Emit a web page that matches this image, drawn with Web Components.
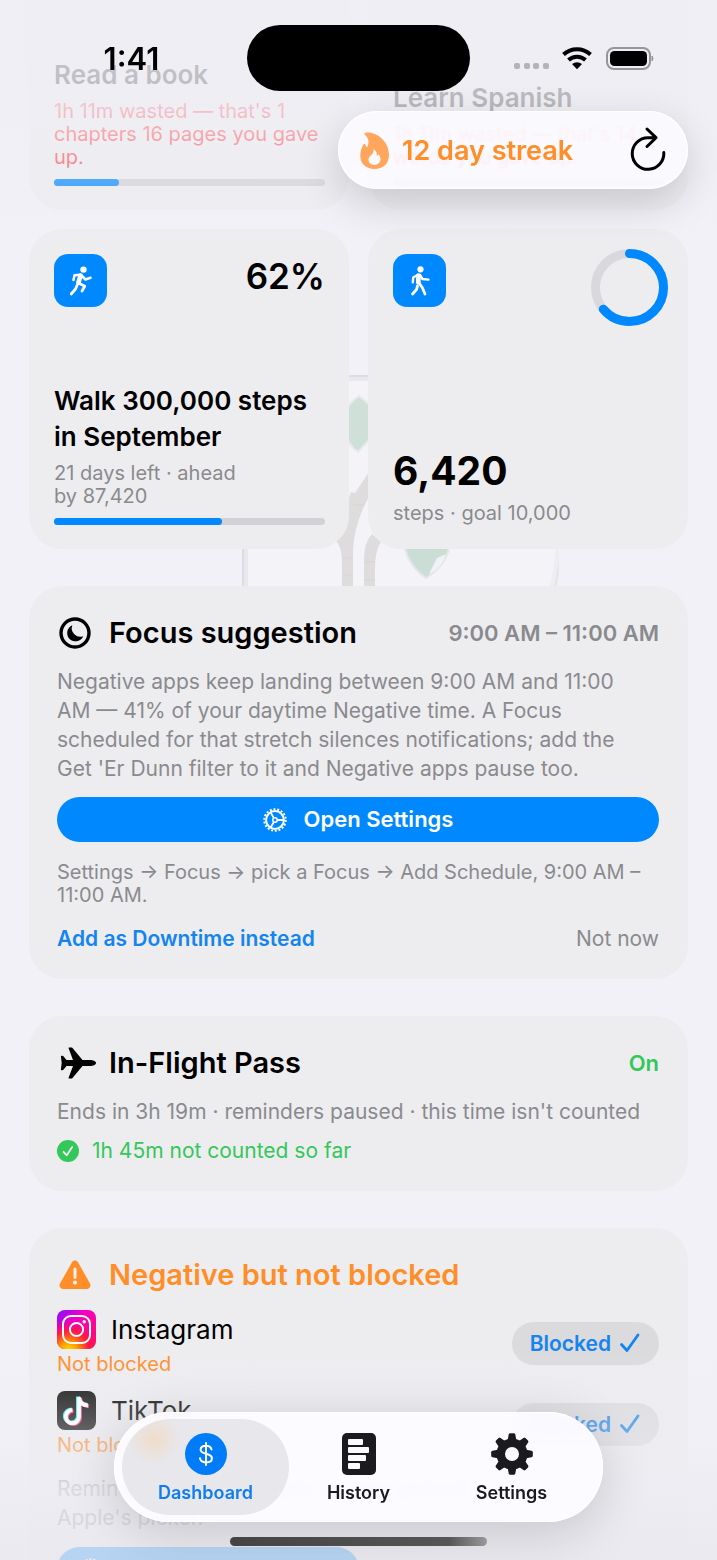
<!DOCTYPE html>
<html lang="en">
<head>
<meta charset="utf-8">
<meta name="viewport" content="width=device-width, initial-scale=1">
<title>Dashboard</title>
<style>
    html, body {
        height: 100%;
        margin: 0;
        overflow: hidden;
    }

    body {
        --blue: #0088ff;
        --orange: #ff8d28;
        --green: #34c759;
        --grey: #8a8a8e;
        --page: #f2f1f7;
        --card: #ededf0;
        font-family: Inter, "Liberation Sans", sans-serif;
        color: #000;
        background: var(--page);
    }
</style>
</head>
<body>
<app-screen>
    <status-bar slot="status" time="1:41"></status-bar>
    <streak-pill slot="streak" days="12"></streak-pill>

    <tile-grid>
        <goal-tile>
            <span slot="title">Read a book</span>
            <span slot="caption" style="color: #ff383c">1h 11m wasted — that's 1 chapters 16 pages you gave up.</span>
            <progress-line slot="progress" value="24"></progress-line>
        </goal-tile>
        <goal-tile>
            <span slot="title">Learn Spanish</span>
            <span slot="caption" style="color: #ff383c">1h 11m wasted — that's 14 words you gave up.</span>
            <progress-line slot="progress" value="0"></progress-line>
        </goal-tile>
        <goal-tile icon="run">
            <span slot="value">62%</span>
            <span slot="title">Walk 300,000 steps in September</span>
            <span slot="caption">21 days left · ahead<br>by 87,420</span>
            <progress-line slot="progress" value="62"></progress-line>
        </goal-tile>
        <goal-tile icon="walk">
            <progress-ring slot="value" value="64"></progress-ring>
            <strong slot="number">6,420</strong>
            <span slot="caption">steps · goal 10,000</span>
        </goal-tile>
    </tile-grid>

    <info-card icon="moon" heading="Focus suggestion">
        <span slot="aside">9:00 AM – 11:00 AM</span>
        <focus-suggestion></focus-suggestion>
    </info-card>

    <info-card icon="plane" heading="In-Flight Pass">
        <span slot="aside" style="color: var(--green)">On</span>
        <flight-pass></flight-pass>
    </info-card>

    <info-card icon="warning" heading="Negative but not blocked" style="--heading: var(--orange)">
        <blocked-list></blocked-list>
    </info-card>

    <tab-bar slot="tabs"></tab-bar>
</app-screen>

<script>
const ICONS = {
    run: `<svg viewBox="0 0 24 30" fill="none" stroke="#fff" stroke-width="3" stroke-linecap="round" stroke-linejoin="round">
        <circle cx="14.5" cy="3.6" r="3.2" fill="#fff" stroke="none"/>
        <path d="M4.5 14 L5.5 9.3 L11 8.8" stroke-width="2.5"/>
        <path d="M11.5 9.5 L9.3 17" stroke-width="4.6"/>
        <path d="M13 10 L16.500 13.500 L21.500 11.800" stroke-width="2.500"/>
        <path d="M9.500 17 L15.800 20.200 L13 25" stroke-width="2.800"/>
        <path d="M8 19.500 L6.500 23 L2.200 28" stroke-width="2.800"/></svg>`,
    walk: `<svg viewBox="0 0 24 30" fill="none" stroke="#fff" stroke-width="3" stroke-linecap="round" stroke-linejoin="round">
        <circle cx="12.500" cy="3.300" r="3.100" fill="#fff" stroke="none"/>
        <path d="M10.500 9.500 L10.300 16.500" stroke-width="4.600"/>
        <path d="M9.500 9 L5.200 11.500 L4.800 16.300" stroke-width="2.400"/>
        <path d="M12 9 L14.500 13 L20.500 13.600" stroke-width="2.400"/>
        <path d="M11.500 17.500 L14.500 22 L17 28" stroke-width="2.800"/>
        <path d="M9.500 20 L8.500 23.500 L4.500 28" stroke-width="2.800"/></svg>`,
    moon: `<svg viewBox="0 0 32 32"><circle cx="16" cy="16" r="14" fill="none" stroke="#000" stroke-width="3.400"/>
        <path d="M13.300 8.200 A8.400 8.400 0 1 0 24.300 19.200 A8.600 8.600 0 0 1 13.300 8.200Z"/></svg>`,
    plane: `<svg viewBox="-3 0 36 32"><path d="M36 16 C36 18 33 19 30 19 H22.500 L12.500 31 C12.200 31.500 11.800 31.600 11.300 31.600 H9.200 C8.600 31.600 8.400 31.200 8.600 30.700 L13 19 H6.500 L3.400 22.800 C3.100 23.100 2.800 23.300 2.400 23.300 H1.500 C1.100 23.300 .9 23 .9 22.600 L1.700 16 L.9 9.400 C.9 9 1.100 8.700 1.500 8.700 H2.400 C2.800 8.700 3.100 8.900 3.400 9.200 L6.500 13 H13 L8.600 1.300 C8.400 .8 8.600 .4 9.200 .4 H11.300 C11.800 .4 12.200 .5 12.500 1 L22.500 13 H30 C33 13 36 14 36 16Z"/></svg>`,
    warning: `<svg viewBox="0 0 34 32"><path d="M14 3.200 C15.300 .9 18.700 .9 20 3.200 L32 24.500 C33.300 26.900 31.700 30 28.700 30 H5.300 C2.300 30 .7 26.900 2 24.500Z" fill="#ff8d28"/>
        <path d="M17 10 V18.500" stroke="#f4f1ef" stroke-width="3" stroke-linecap="round"/><circle cx="17" cy="23.600" r="2.100" fill="#f4f1ef"/></svg>`,
    check: `<svg viewBox="0 0 22 22"><circle cx="11" cy="11" r="11" fill="#34c759"/>
        <path d="M6.500 11.800 L9.800 15.300 L15.200 7" fill="none" stroke="#f2f7f3" stroke-width="1.800" stroke-linecap="round" stroke-linejoin="round"/></svg>`,
    tick: `<svg viewBox="0 0 20 20"><path d="M1.500 11.500 L7 17.500 L18 2" fill="none" stroke="currentColor" stroke-width="2.800" stroke-linecap="round" stroke-linejoin="round"/></svg>`,
    gear: `<svg viewBox="0 0 24 24" fill="none" stroke="#fff"><circle cx="12" cy="12" r="10.800" stroke-width="2" stroke-dasharray="2 1.770"/>
        <circle cx="12" cy="12" r="8.900" stroke-width="2"/><circle cx="12" cy="12" r="2.200" stroke-width="1.600"/>
        <path d="M14.200 12 H20.500 M10.900 10.100 L7.800 4.700 M10.900 13.900 L7.800 19.300" stroke-width="1.800"/></svg>`,
    flame: `<svg viewBox="0 0 29 37"><path fill="#ffa55c" fill-rule="evenodd" d="M5 1 C14-1.500 29 8 29 23 C29 31.500 23 37 14.500 37 C6 37 .3 31.500 .3 24 C.3 19 1.600 15.500 3.600 12.300 C4.100 11.400 5 11.500 5.300 12.400 C5.600 13.600 6.200 14.600 7.200 15.300 C9.500 10.500 8.800 6.500 4.800 2.500 C4.200 1.900 4.300 1.200 5 1Z M13.600 17.200 C13.800 20.200 12.500 22 10.500 23.800 C9.500 24.600 8.500 25.700 8.500 27.600 C8.500 30.800 11 33 14.300 33 C17.800 33 20.500 30.600 20.500 27.300 C20.500 25.200 19.700 23.500 18.700 22.300 C18.200 23.100 17.600 23.600 16.800 23.900 C17.300 21.200 16.200 18.600 13.600 17.200Z"/></svg>`,
    refresh: `<svg viewBox="0 0 36 44" fill="none" stroke="#000" stroke-width="3" stroke-linecap="round" stroke-linejoin="round">
        <path d="M33.800 25.500 A15.800 15.800 0 1 1 18 10.700 H26 M17 2 L26 10.700 L17 19.500"/></svg>`,
    dollar: `<svg viewBox="0 0 42 42"><circle cx="21" cy="21" r="21" fill="#007cf8"/>
        <path d="M21 10 V32 M26.500 16.600 C26 14 24 12.800 21 12.800 C17.800 12.800 15.600 14.300 15.600 16.800 C15.600 22.300 26.900 19.200 26.900 25.200 C26.900 27.900 24.400 29.400 21 29.400 C17.600 29.400 15.300 28 15 25.200" fill="none" stroke="#fff" stroke-width="2" stroke-linecap="round"/></svg>`,
    history: `<svg viewBox="0 0 42 42"><rect x="4" width="34" height="42" rx="5" fill="#1a1a1f"/>
        <g fill="#fcfbff"><rect x="10" y="6" width="15" height="6" rx="1"/><rect x="10" y="14" width="21" height="6" rx="1"/><rect x="10" y="22" width="18" height="6" rx="1"/><rect x="10" y="30" width="12" height="6" rx="1"/></g></svg>`,
    cog: `<svg viewBox="0 0 42 42" fill="#1a1a1f"><g id="t"><path d="M16.500 8 L17.700 1.500 Q18 .2 19.200 .2 H22.800 Q24 .2 24.300 1.500 L25.500 8 V34 L24.300 40.500 Q24 41.800 22.800 41.800 H19.200 Q18 41.800 17.700 40.500 L16.500 34Z"/></g>
        <use href="#t" transform="rotate(45 21 21)"/><use href="#t" transform="rotate(90 21 21)"/><use href="#t" transform="rotate(135 21 21)"/>
        <circle cx="21" cy="21" r="15.500"/><circle cx="21" cy="21" r="7" fill="#fcfbff"/></svg>`,
    instagram: `<svg viewBox="0 0 39 39"><defs>
        <linearGradient id="a" x1="0" y1="0" x2="1" y2="1"><stop offset="0" stop-color="#7a10ff"/><stop offset=".35" stop-color="#f000c8"/><stop offset="1" stop-color="#ff1060"/></linearGradient>
        <radialGradient id="b" cx=".3" cy="1.050" r=".8"><stop offset="0" stop-color="#ffe000"/><stop offset=".3" stop-color="#ff9a00"/><stop offset=".65" stop-color="#ff2030" stop-opacity=".85"/><stop offset="1" stop-color="#ff0070" stop-opacity="0"/></radialGradient></defs>
        <rect width="39" height="39" rx="8" fill="url(#a)"/><rect width="39" height="39" rx="8" fill="url(#b)"/>
        <g fill="none" stroke="#fff" stroke-width="2"><rect x="6" y="6" width="27" height="27" rx="8"/><circle cx="19.500" cy="19.500" r="6.600"/></g><circle cx="27.200" cy="11.800" r="1.700" fill="#fff"/></svg>`,
    tiktok: `<svg viewBox="0 0 39 39"><rect width="39" height="39" rx="8" fill="#0c0c0c"/>
        <g fill="none" stroke-width="4"><path d="M21 5.500 V25 A6.600 6.600 0 1 1 14.400 18.400 M21 5.500 C21.500 10.500 25 13.500 30 13.800" stroke="#25f4ee"/>
        <path d="M23 7 V26.500 A6.600 6.600 0 1 1 16.400 19.900 M23 7 C23.500 12 27 14.800 32 15.300" stroke="#fe2c55"/>
        <path d="M22 6.200 V25.700 A6.600 6.600 0 1 1 15.400 19.100 M22 6.200 C22.500 11.200 26 14.200 31 14.500" stroke="#fff"/></g></svg>`
};

class GlyphIcon extends HTMLElement {

    constructor() {
        super();
        this.attachShadow({mode: "open"});
    }

    connectedCallback() {
        this.shadowRoot.innerHTML = `
        <style>
            :host { display: inline-flex; flex: none; }
            svg { display: block; width: 100%; height: 100%; overflow: visible; }
        </style>
        ${ICONS[this.getAttribute("name")]}
        `;
    }
}

class AppScreen extends HTMLElement {

    constructor() {
        super();
        this.attachShadow({mode: "open"});
    }

    connectedCallback() {
        this.shadowRoot.innerHTML = `
        <style>
            :host {
                display: block;
                position: relative;
                height: 100vh;
                overflow: hidden;
            }

            /* the list is scrolled a little way down */
            main {
                display: flex;
                flex-direction: column;
                gap: 37px;
                margin-top: -110px;
                padding: 0 29px;
                position: relative;
            }

            .fade {
                position: absolute;
                left: 0;
                right: 0;
                pointer-events: none;
            }

            .fade.top {
                top: 0;
                height: 250px;
                background: linear-gradient(rgba(239, 238, 244, 0.86) 0, rgba(239, 238, 244, 0.8) 80px, rgba(239, 238, 244, 0.76) 110px, rgba(239, 238, 244, 0.34) 180px, rgba(239, 238, 244, 0) 250px);
            }

            .fade.bottom {
                bottom: 0;
                height: 210px;
                background: linear-gradient(rgba(239, 238, 244, 0), rgba(238, 237, 243, 0.46) 96px, rgba(237, 236, 242, 0.82) 140px, rgba(233, 232, 238, 0.78));
            }

            .home {
                position: absolute;
                bottom: 14px;
                left: 50%;
                width: 257px;
                height: 9px;
                margin-left: -129px;
                border-radius: 5px;
                background: linear-gradient(90deg, #444 0, #555 85%, #999);
            }

            slot[name="streak"]::slotted(*) {
                position: absolute;
                top: 111px;
                right: 29px;
            }

            slot[name="status"]::slotted(*) {
                position: absolute;
                top: 25px;
                left: 0;
                right: 0;
            }

            .dock {
                position: absolute;
                bottom: 38px;
                left: 0;
                right: 0;
                display: flex;
                justify-content: center;
            }
        </style>
        <tree-art></tree-art>
        <main><slot></slot></main>
        <div class="fade top"></div>
        <div class="fade bottom"></div>
        <slot name="streak"></slot>
        <slot name="status"></slot>
        <div class="dock"><slot name="tabs"></slot></div>
        <div class="home"></div>
        `;
    }
}

/* faint artwork behind the cards */
class TreeArt extends HTMLElement {

    constructor() {
        super();
        this.attachShadow({mode: "open"});
    }

    connectedCallback() {
        this.shadowRoot.innerHTML = `
        <style>
            :host {
                position: absolute;
                top: 360px;
                left: 50%;
                width: 400px;
                height: 240px;
                margin-left: -200px;
            }
            svg { display: block; }
        </style>
        <svg width="400" height="240" viewBox="158 360 400 240" fill="none" aria-hidden="true">
            <path d="M243 376 H557 V560 L546 600 H243Z" fill="#f4f3f8"/>
            <path d="M242 376 V600" stroke="#dddce2" stroke-width="2"/>
            <path d="M245 376 V600" stroke="#e9e8ee" stroke-width="4"/>
            <path d="M243 376 H557" stroke="#dddce2" stroke-width="2"/>
            <path d="M243 379 H557" stroke="#e9e8ee" stroke-width="4"/>
            <path d="M560 548 Q558 570 551 600" stroke="#e6e5eb" stroke-width="3"/>
            <path d="M557 548 Q555 570 548 600" stroke="#eeedf3" stroke-width="4"/>
            <path d="M358 396 Q341 408 342 428 Q347 445 357 452 Q362 446 368 440 Q375 420 372 408Z" fill="#cfe0d9" stroke="#e6e9ec" stroke-width="2"/>
            <path d="M404 548 Q408 566 425 578 Q444 566 448 548Z" fill="#cbded6" stroke="#e2e7e8" stroke-width="2"/>
            <path d="M436 558 L445 554 Q441 568 428 574Z" fill="#f2f2f6"/>
            <path d="M341 600 V562 Q341 546 334 540 L350 492 L354 493 L372 466 V490 Q353 520 352 552 V600Z" fill="#dfdcde"/>
            <path d="M363 600 V560 Q363 542 371 534 L380 542 Q374 550 374 570 V600Z" fill="#dfdcde"/>
            <path d="M342 575 H352 M342 558 H351 M352 505 H362 M342 587 H352 M363 580 H374 M364 562 H374" stroke="#d6d3d5"/>
        </svg>
        `;
    }
}

class StatusBar extends HTMLElement {

    constructor() {
        super();
        this.attachShadow({mode: "open"});
    }

    connectedCallback() {
        this.shadowRoot.innerHTML = `
        <style>
            :host {
                display: grid;
                grid-template-columns: 1fr 223px 1fr;
                align-items: center;
            }

            time {
                padding-left: 16px;
                text-align: center;
                font-size: 31px;
                font-weight: 600;
            }

            .island {
                height: 66px;
                border-radius: 33px;
                background: #000;
            }

            .signals {
                display: flex;
                justify-content: center;
                padding-right: 20px;
            }
        </style>
        <time>${this.getAttribute("time")}</time>
        <div class="island"></div>
        <div class="signals">
            <svg width="140" height="24" viewBox="0 0 140 24" role="img" aria-label="Wi-Fi and battery">
                <g fill="#b4b3b8"><rect y="17" width="6" height="6" rx="2"/><rect x="10" y="17" width="6" height="6" rx="2"/><rect x="19" y="17" width="6" height="6" rx="2"/><rect x="29" y="17" width="6" height="6" rx="2"/></g>
                <g fill="none" stroke="#000" stroke-width="4"><path d="M49.500 8.500 A20 20 0 0 1 76.500 8.500"/><path d="M54.500 14 A12.500 12.500 0 0 1 71.500 14"/></g>
                <path d="M58 18 Q63 14.500 68 18 L63 23.200Z"/>
                <rect x="93" y="2" width="43" height="21" rx="7" fill="none" stroke="#96959a" stroke-width="2"/>
                <rect x="96" y="5" width="37" height="15" rx="4.500"/>
                <path d="M138 10 Q140 12.500 138 15Z" fill="#96959a" stroke="#96959a"/>
            </svg>
        </div>
        `;
    }
}

class StreakPill extends HTMLElement {

    constructor() {
        super();
        this.attachShadow({mode: "open"});
    }

    connectedCallback() {
        this.shadowRoot.innerHTML = `
        <style>
            :host {
                display: flex;
                align-items: center;
                gap: 13px;
                box-sizing: border-box;
                width: 350px;
                height: 78px;
                padding: 0 22px;
                border-radius: 39px;
                background: rgba(252, 251, 255, 0.88);
                backdrop-filter: blur(1px);
                box-shadow: 0 14px 40px rgba(0, 0, 0, 0.16), inset 0 0 0 1px #fff;
                color: var(--orange);
                font-size: 27px;
                font-weight: 600;
            }

            .flame { width: 29px; height: 37px; }

            button {
                margin-left: auto;
                padding: 0;
                border: 0;
                background: none;
                cursor: pointer;
            }

            button glyph-icon { width: 36px; height: 44px; }
        </style>
        <glyph-icon class="flame" name="flame"></glyph-icon>
        <span>${this.getAttribute("days")} day streak</span>
        <button type="button" aria-label="Refresh"><glyph-icon name="refresh"></glyph-icon></button>
        `;
    }
}

class TileGrid extends HTMLElement {

    constructor() {
        super();
        this.attachShadow({mode: "open"});
    }

    connectedCallback() {
        this.shadowRoot.innerHTML = `
        <style>
            :host {
                display: grid;
                grid-template-columns: 1fr 1fr;
                gap: 19px;
            }
        </style>
        <slot></slot>
        `;
    }
}

class GoalTile extends HTMLElement {

    constructor() {
        super();
        this.attachShadow({mode: "open"});
    }

    connectedCallback() {
        const icon = this.getAttribute("icon");
        this.shadowRoot.innerHTML = `
        <style>
            :host {
                display: flex;
                flex-direction: column;
                box-sizing: border-box;
                aspect-ratio: 1;
                padding: 25px 24px 24px 25px;
                border-radius: 33px;
                background: var(--card);
            }

            header {
                display: flex;
                justify-content: space-between;
                height: 53px;
                margin-bottom: auto;
            }

            .badge {
                display: flex;
                align-items: center;
                justify-content: center;
                width: 53px;
                height: 53px;
                border-radius: 14px;
                background: var(--blue);
            }

            .badge glyph-icon { width: 24px; height: 30px; }

            ::slotted(span[slot="value"]) {
                font-size: 35px;
                line-height: 44px;
                font-weight: 600;
            }

            ::slotted(progress-ring) { margin: -5px -4px 0 0; }

            ::slotted([slot="title"]) {
                font-size: 26px;
                line-height: 36px;
                font-weight: 600;
            }

            ::slotted([slot="number"]) {
                font-size: 39px;
                line-height: 48px;
                font-weight: 700;
            }

            ::slotted([slot="caption"]) {
                margin-top: 7px;
                font-size: 20px;
                line-height: 23px;
                color: var(--grey);
            }

            ::slotted([slot="progress"]) { margin-top: 10px; }
        </style>
        <header>
            ${icon ? `<div class="badge"><glyph-icon name="${icon}"></glyph-icon></div>` : ""}
            <slot name="value"></slot>
        </header>
        <slot name="title"></slot>
        <slot name="number"></slot>
        <slot name="caption"></slot>
        <slot name="progress"></slot>
        `;
    }
}

class ProgressLine extends HTMLElement {

    constructor() {
        super();
        this.attachShadow({mode: "open"});
    }

    connectedCallback() {
        this.shadowRoot.innerHTML = `
        <style>
            :host { display: block; }

            div {
                height: 7px;
                border-radius: 4px;
                background: #d1d1d6;
            }

            .fill {
                width: ${this.getAttribute("value")}%;
                background: var(--blue);
            }
        </style>
        <div role="progressbar" aria-label="Progress" aria-valuenow="${this.getAttribute("value")}"><div class="fill"></div></div>
        `;
    }
}

class ProgressRing extends HTMLElement {

    constructor() {
        super();
        this.attachShadow({mode: "open"});
    }

    connectedCallback() {
        this.shadowRoot.innerHTML = `
        <style>
            :host { display: block; width: 77px; height: 77px; }
            circle { fill: none; stroke-width: 9; }
        </style>
        <svg width="77" height="77" viewBox="0 0 77 77">
            <circle cx="38.500" cy="38.500" r="34" stroke="#d9d9dd"/>
            <circle cx="38.500" cy="38.500" r="34" stroke="#0088ff" stroke-linecap="round" pathLength="100"
                stroke-dasharray="${this.getAttribute("value")} 100" transform="rotate(-90 38.500 38.500)"/>
        </svg>
        `;
    }
}

class InfoCard extends HTMLElement {

    constructor() {
        super();
        this.attachShadow({mode: "open"});
    }

    connectedCallback() {
        this.shadowRoot.innerHTML = `
        <style>
            :host {
                display: block;
                padding: 28px 29px 26px 28px;
                border-radius: 33px;
                background: var(--card);
            }

            header {
                display: flex;
                align-items: center;
                margin-bottom: 15px;
            }

            glyph-icon { width: 36px; height: 32px; }

            h2 {
                flex: 1;
                margin: 0 0 0 16px;
                font-size: 29px;
                line-height: 38px;
                font-weight: 600;
                color: var(--heading, #000);
            }

            ::slotted([slot="aside"]) {
                font-size: 22px;
                font-weight: 600;
                color: var(--grey);
            }
        </style>
        <header>
            <glyph-icon name="${this.getAttribute("icon")}"></glyph-icon>
            <h2>${this.getAttribute("heading")}</h2>
            <slot name="aside"></slot>
        </header>
        <slot></slot>
        `;
    }
}

class FocusSuggestion extends HTMLElement {

    constructor() {
        super();
        this.attachShadow({mode: "open"});
    }

    connectedCallback() {
        this.shadowRoot.innerHTML = `
        <style>
            :host {
                display: block;
                color: var(--grey);
                font-size: 21px;
                line-height: 29px;
            }

            p { margin: 0; }

            .reason { padding-right: 12px; }

            .hint {
                margin: 19px 0 17px;
                font-size: 20px;
                line-height: 23px;
            }

            button {
                padding: 0;
                border: 0;
                background: none;
                font: inherit;
                color: inherit;
                cursor: pointer;
            }

            .open {
                display: flex;
                align-items: center;
                justify-content: center;
                gap: 17px;
                width: 100%;
                height: 45px;
                margin-top: 14px;
                border-radius: 23px;
                background: var(--blue);
                color: #fff;
                font-size: 22px;
                font-weight: 600;
            }

            .open glyph-icon { width: 24px; height: 24px; }

            .actions {
                display: flex;
                justify-content: space-between;
            }

            .actions .add {
                color: #1484ee;
                font-weight: 600;
            }
        </style>
        <p class="reason">Negative apps keep landing between 9:00 AM and 11:00 AM — 41% of your daytime Negative time. A Focus scheduled for that stretch silences notifications; add the Get 'Er Dunn filter to it and Negative apps pause too.</p>
        <button class="open" type="button"><glyph-icon name="gear"></glyph-icon>Open Settings</button>
        <p class="hint">Settings → Focus → pick a Focus → Add Schedule, 9:00 AM – 11:00 AM.</p>
        <div class="actions">
            <button class="add" type="button">Add as Downtime instead</button>
            <button type="button">Not now</button>
        </div>
        `;
    }
}

class FlightPass extends HTMLElement {

    constructor() {
        super();
        this.attachShadow({mode: "open"});
    }

    connectedCallback() {
        this.shadowRoot.innerHTML = `
        <style>
            :host {
                display: block;
                font-size: 21px;
                line-height: 29px;
                color: var(--grey);
            }

            p { margin: 0; }

            .saved {
                display: flex;
                align-items: center;
                gap: 13px;
                margin-top: 10px;
                color: var(--green);
            }

            glyph-icon { width: 22px; height: 22px; }
        </style>
        <p>Ends in 3h 19m · reminders paused · this time isn't counted</p>
        <p class="saved"><glyph-icon name="check"></glyph-icon>1h 45m not counted so far</p>
        `;
    }
}

class BlockedList extends HTMLElement {

    constructor() {
        super();
        this.attachShadow({mode: "open"});
        this.apps = [
            {name: "Instagram", icon: "instagram"},
            {name: "TikTok", icon: "tiktok"}
        ];
    }

    connectedCallback() {
        this.shadowRoot.innerHTML = `
        <style>
            :host { display: block; }

            ul {
                display: flex;
                flex-direction: column;
                gap: 15px;
                margin: 0;
                padding: 1px 0 0;
                list-style: none;
            }

            li {
                display: flex;
                align-items: center;
                justify-content: space-between;
            }

            .name {
                display: flex;
                align-items: center;
                gap: 15px;
                font-size: 26px;
                line-height: 39px;
            }

            .name glyph-icon { width: 39px; height: 39px; }

            .state {
                margin-top: 4px;
                font-size: 20px;
                line-height: 23px;
                color: var(--orange);
            }

            button {
                display: flex;
                align-items: center;
                border: 0;
                font: inherit;
                font-size: 21px;
                font-weight: 600;
                cursor: pointer;
            }

            li button {
                gap: 9px;
                height: 43px;
                padding: 0 19px 0 18px;
                border-radius: 22px;
                background: #dbdbde;
                color: #1484ee;
            }

            li button glyph-icon { width: 20px; height: 20px; }

            p {
                margin: 17px 0 15px;
                font-size: 21px;
                line-height: 29px;
                color: var(--grey);
            }

            .pick {
                width: 302px;
                height: 45px;
                padding: 0 22px;
                border-radius: 23px;
                background: var(--blue);
            }

            .pick glyph-icon { width: 24px; height: 24px; }
        </style>
        <ul>
            ${this.apps.map(app => `
            <li>
                <div>
                    <div class="name"><glyph-icon name="${app.icon}"></glyph-icon>${app.name}</div>
                    <div class="state">Not blocked</div>
                </div>
                <button type="button">Blocked <glyph-icon name="tick"></glyph-icon></button>
            </li>`).join("")}
        </ul>
        <p>Reminders can only apply to apps picked in<br>Apple's picker.</p>
        <button class="pick" type="button" aria-label="Pick apps"><glyph-icon name="gear"></glyph-icon></button>
        `;
    }
}

class TabBar extends HTMLElement {

    constructor() {
        super();
        this.attachShadow({mode: "open"});
        this.tabs = [
            {label: "Dashboard", icon: "dollar"},
            {label: "History", icon: "history"},
            {label: "Settings", icon: "cog"}
        ];
    }

    connectedCallback() {
        this.shadowRoot.innerHTML = `
        <style>
            :host {
                display: block;
                border-radius: 55px;
                background: rgba(252, 251, 255, 0.96);
                backdrop-filter: blur(3px);
                box-shadow: 0 10px 50px rgba(0, 0, 0, 0.16), inset 0 0 0 1px #fff;
            }

            nav {
                display: flex;
                padding: 7px 8px;
            }

            button {
                display: flex;
                flex-direction: column;
                align-items: center;
                gap: 6px;
                width: 167px;
                padding: 14px 0 10px;
                border: 0;
                border-radius: 48px;
                background: none;
                color: #1a1a1f;
                font: inherit;
                font-size: 18px;
                line-height: 24px;
                font-weight: 600;
                cursor: pointer;
            }

            button + button { margin-left: -14px; }

            button[aria-current] {
                background: radial-gradient(circle at 32px 20px, rgba(255, 196, 120, 0.3), rgba(255, 196, 120, 0) 26px) #e8e7ec;
                color: #0f7df0;
            }

            glyph-icon { width: 42px; height: 42px; }
        </style>
        <nav>
            ${this.tabs.map((tab, i) => `
            <button type="button" ${i === 0 ? `aria-current="page"` : ""}><glyph-icon name="${tab.icon}"></glyph-icon>${tab.label}</button>`).join("")}
        </nav>
        `;
    }
}

customElements.define("glyph-icon", GlyphIcon);
customElements.define("tree-art", TreeArt);
customElements.define("app-screen", AppScreen);
customElements.define("status-bar", StatusBar);
customElements.define("streak-pill", StreakPill);
customElements.define("tile-grid", TileGrid);
customElements.define("goal-tile", GoalTile);
customElements.define("progress-line", ProgressLine);
customElements.define("progress-ring", ProgressRing);
customElements.define("info-card", InfoCard);
customElements.define("focus-suggestion", FocusSuggestion);
customElements.define("flight-pass", FlightPass);
customElements.define("blocked-list", BlockedList);
customElements.define("tab-bar", TabBar);
</script>
</body>
</html>
